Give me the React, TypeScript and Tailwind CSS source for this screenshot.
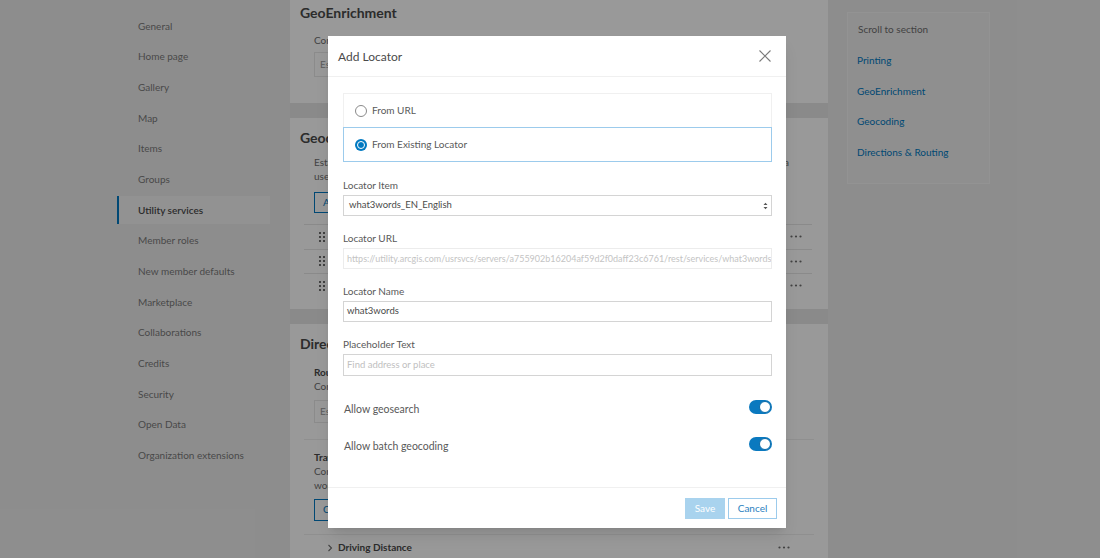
import React from 'react';

const sideItems = [
  'General',
  'Home page',
  'Gallery',
  'Map',
  'Items',
  'Groups',
  'Utility services',
  'Member roles',
  'New member defaults',
  'Marketplace',
  'Collaborations',
  'Credits',
  'Security',
  'Open Data',
  'Organization extensions',
];

const sections = ['Printing', 'GeoEnrichment', 'Geocoding', 'Directions & Routing'];

const locators = ['ArcGIS World Geocoding Service', 'Esri Community Locator', 'what3words_EN_English'];

function DragHandle() {
  return (
    <svg width="6" height="10" viewBox="0 0 6 10" className="shrink-0">
      {[0, 4].map((x) =>
        [0, 4, 8].map((y) => <rect key={`${x}-${y}`} x={x} y={y} width="2" height="2" fill="#6e6e6e" />)
      )}
    </svg>
  );
}

function Dots() {
  return (
    <svg width="12" height="3" viewBox="0 0 12 3">
      <circle cx="1.5" cy="1.5" r="1.1" fill="#6e6e6e" />
      <circle cx="6" cy="1.5" r="1.1" fill="#6e6e6e" />
      <circle cx="10.5" cy="1.5" r="1.1" fill="#6e6e6e" />
    </svg>
  );
}

function Toggle() {
  return (
    <div className="w-[23px] h-[14px] rounded-full bg-[#0a79bf] flex items-center justify-end pr-[1px]">
      <div className="w-[12px] h-[12px] rounded-full bg-white border border-[#0a6aa8]" />
    </div>
  );
}

function Field({ label, children }: { label: string; children: React.ReactNode }) {
  return (
    <div className="flex flex-col">
      <div className="text-[10px] leading-[14px] text-[#595959]">{label}</div>
      <div className="mt-[3px]">{children}</div>
    </div>
  );
}

export default function App() {
  return (
    <div className="relative w-[1100px] h-[558px] overflow-hidden bg-[#ececec] font-['Lato','Noto_Sans',sans-serif]">
      {/* page behind the modal */}
      <div className="flex pl-[117px]">
        {/* Sidebar */}
        <nav className="w-[153px] pt-[12px] flex flex-col gap-[2.7px]">
          {sideItems.map((item) => {
            const active = item === 'Utility services';
            return (
              <div
                key={item}
                className={
                  active
                    ? 'h-[28px] flex items-center pl-[19px] border-l-2 border-[#0079c1] bg-[#f4f4f4] text-[10px] text-[#4a4a4a] font-semibold'
                    : 'h-[28px] flex items-center pl-[21px] text-[10px] text-[#7a7a7a]'
                }
              >
                {item}
              </div>
            );
          })}
        </nav>

        {/* Main column */}
        <main className="ml-[20px] w-[538px] -mt-[7px] flex flex-col gap-[15px] bg-[#e7e7e7]">
          <section className="bg-white px-[10px] pt-[11px] h-[110px]">
            <h2 className="text-[14px] leading-[18px] font-bold text-[#4a4a4a]">GeoEnrichment</h2>
            <div className="px-[14px]">
              <p className="mt-[11px] text-[10px] leading-[14px] text-[#6e6e6e]">
                Configure the GeoEnrichment service for your organization.
              </p>
              <div className="mt-[5px] h-[25px] w-[300px] border border-[#e8e8e8] flex items-center px-[5px] text-[10px] text-[#9a9a9a]">
                Esri GeoEnrichment Service
              </div>
            </div>
          </section>

          <section className="bg-white px-[10px] pt-[11px] pb-[11px]">
            <h2 className="text-[14px] leading-[18px] font-bold text-[#4a4a4a]">Geocoding</h2>
            <p className="mx-[14px] mt-[8px] text-[10px] leading-[14px] text-[#6e6e6e]">
              Establish which locators are used for finding addresses and places in maps and apps. Drag to reorder or add a
              <br />
              user-defined locator from a URL or an existing locator item.
            </p>
            <button className="ml-[14px] mt-[9px] h-[21px] px-[8px] border border-[#0079c1] text-[10px] text-[#0079c1]">
              Add Locator
            </button>
            <div className="ml-[4px] mr-[6px] mt-[11px]">
              {locators.map((l) => (
                <div key={l} className="h-[24.5px] border-t border-[#e6e6e6] flex items-center pl-[15px] pr-[10px] gap-[10px]">
                  <DragHandle />
                  <span className="flex-1 text-[10px] text-[#4a4a4a]">{l}</span>
                  <Dots />
                </div>
              ))}
            </div>
          </section>

          <section className="bg-white px-[10px] pt-[11px] h-[260px]">
            <h2 className="text-[14px] leading-[18px] font-bold text-[#4a4a4a]">Directions &amp; Routing</h2>
            <div className="px-[14px]">
              <div className="mt-[12px] text-[10px] leading-[14px] font-bold text-[#4a4a4a]">Routing Service</div>
              <p className="text-[10px] leading-[14px] text-[#6e6e6e]">Configure the service used for routing and directions.</p>
              <div className="mt-[7px] h-[23px] w-[300px] border border-[#e8e8e8] flex items-center px-[5px] text-[10px] text-[#9a9a9a]">
                Esri World Route Service
              </div>
            </div>
            <div className="mx-[4px] mt-[16px] border-t border-[#eeeeee]" />
            <div className="px-[14px]">
              <div className="mt-[10px] text-[10px] leading-[14px] font-bold text-[#4a4a4a]">Travel Modes</div>
              <p className="text-[10px] leading-[14px] text-[#6e6e6e]">
                Configure the travel modes available to members of your organization when they
                <br />
                work with directions and analysis.
              </p>
              <button className="mt-[7px] h-[22px] px-[8px] border border-[#0079c1] text-[10px] text-[#0079c1]">
                Configure Travel Modes
              </button>
            </div>
            <div className="mx-[4px] mt-[13px] border-t border-[#eeeeee]" />
            <div className="h-[26px] flex items-center pl-[27px] pr-[28px] gap-[5px]">
              <svg width="6" height="8" viewBox="0 0 6 8">
                <path d="M1.5 1 L4.5 4 L1.5 7" fill="none" stroke="#6e6e6e" strokeWidth="1.1" />
              </svg>
              <span className="flex-1 text-[10px] font-bold text-[#4a4a4a]">Driving Distance</span>
              <Dots />
            </div>
          </section>
        </main>

        {/* Scroll to section */}
        <aside className="ml-[19px] mt-[12px] w-[143px] h-[172px] border border-[#f6f6f6] bg-[#efefef] pt-[8px]">
          <div className="pl-[10px] text-[10px] leading-[16px] text-[#6e6e6e]">Scroll to section</div>
          <div className="mt-[8px] flex flex-col">
            {sections.map((s) => (
              <div key={s} className="h-[30.7px] flex items-center pl-[9px] text-[10px] text-[#0079c1]">
                {s}
              </div>
            ))}
          </div>
        </aside>
      </div>

      {/* Modal overlay */}
      <div className="absolute inset-0 bg-black/40 flex items-start pl-[328px] pt-[36px]">
        <div className="w-[458px] h-[492px] bg-white flex flex-col shadow-lg">
          <header className="h-[41px] flex items-center justify-between pl-[10px] pr-[15px] border-b border-[#f0f0f0] shrink-0">
            <span className="text-[12px] text-[#4a4a4a] mt-[2px]">Add Locator</span>
            <svg width="12" height="12" viewBox="0 0 12 12">
              <path d="M0.5 0.5 L11.5 11.5 M11.5 0.5 L0.5 11.5" stroke="#7a7a7a" strokeWidth="1.1" />
            </svg>
          </header>

          <div className="flex-1 pl-[15px] pr-[14px] pt-[16px] flex flex-col">
            {/* radio group */}
            <div className="flex flex-col">
              <div className="h-[34px] flex items-center pl-[11px] gap-[5px] border-t border-x border-[#f0f0f0]">
                <div className="w-[12px] h-[12px] rounded-full border border-[#8a8a8a]" />
                <span className="text-[10px] text-[#595959]">From URL</span>
              </div>
              <div className="h-[35px] flex items-center pl-[11px] gap-[5px] border border-[#9ccbec]">
                <div className="w-[12px] h-[12px] rounded-full bg-[#0079c1] p-[2px]">
                  <div className="w-full h-full rounded-full border-[1.5px] border-white bg-[#0079c1]" />
                </div>
                <span className="text-[10px] text-[#595959]">From Existing Locator</span>
              </div>
            </div>

            <div className="mt-[16px] flex flex-col gap-[15px]">
              <Field label="Locator Item">
                <div className="h-[21px] border border-[#d4d4d4] flex items-center justify-between pl-[5px] pr-[3px] text-[9.5px] text-[#4a4a4a]">
                  <span>what3words_EN_English</span>
                  <svg width="5" height="8" viewBox="0 0 5 8">
                    <path d="M0.5 3 L2.5 0.8 L4.5 3 Z M0.5 5 L2.5 7.2 L4.5 5 Z" fill="#555" />
                  </svg>
                </div>
              </Field>
              <Field label="Locator URL">
                <div className="h-[21px] border border-[#ececec] flex items-center pl-[3px] overflow-hidden whitespace-nowrap text-[9px] text-[#c4c4c4]">
                  https://utility.arcgis.com/usrsvcs/servers/a755902b16204af59d2f0daff23c6761/rest/services/what3words_EN_English/GeocodeServer
                </div>
              </Field>
              <Field label="Locator Name">
                <div className="h-[21px] border border-[#d4d4d4] flex items-center pl-[3px] text-[9.5px] text-[#4a4a4a]">
                  what3words
                </div>
              </Field>
              <Field label="Placeholder Text">
                <div className="h-[22px] border border-[#d4d4d4] flex items-center pl-[3px] text-[9.5px] text-[#c0c0c0]">
                  Find address or place
                </div>
              </Field>
            </div>

            <div className="mt-[12px] flex flex-col">
              <div className="h-[37px] flex items-center justify-between pl-[1px]">
                <span className="text-[10.5px] text-[#595959] pt-[6px]">Allow geosearch</span>
                <Toggle />
              </div>
              <div className="h-[37px] flex items-center justify-between pl-[1px]">
                <span className="text-[10.5px] text-[#595959] pt-[6px]">Allow batch geocoding</span>
                <Toggle />
              </div>
            </div>
          </div>

          <footer className="h-[41px] border-t border-[#f0f0f0] flex items-start justify-end gap-[3px] pt-[10px] pr-[9px] shrink-0">
            <button className="w-[40px] h-[21px] bg-[#a9d3ee] text-[10px] text-white">Save</button>
            <button className="w-[49px] h-[21px] border border-[#9ccbec] text-[10px] text-[#2a7fc0]">Cancel</button>
          </footer>
        </div>
      </div>
    </div>
  );
}
